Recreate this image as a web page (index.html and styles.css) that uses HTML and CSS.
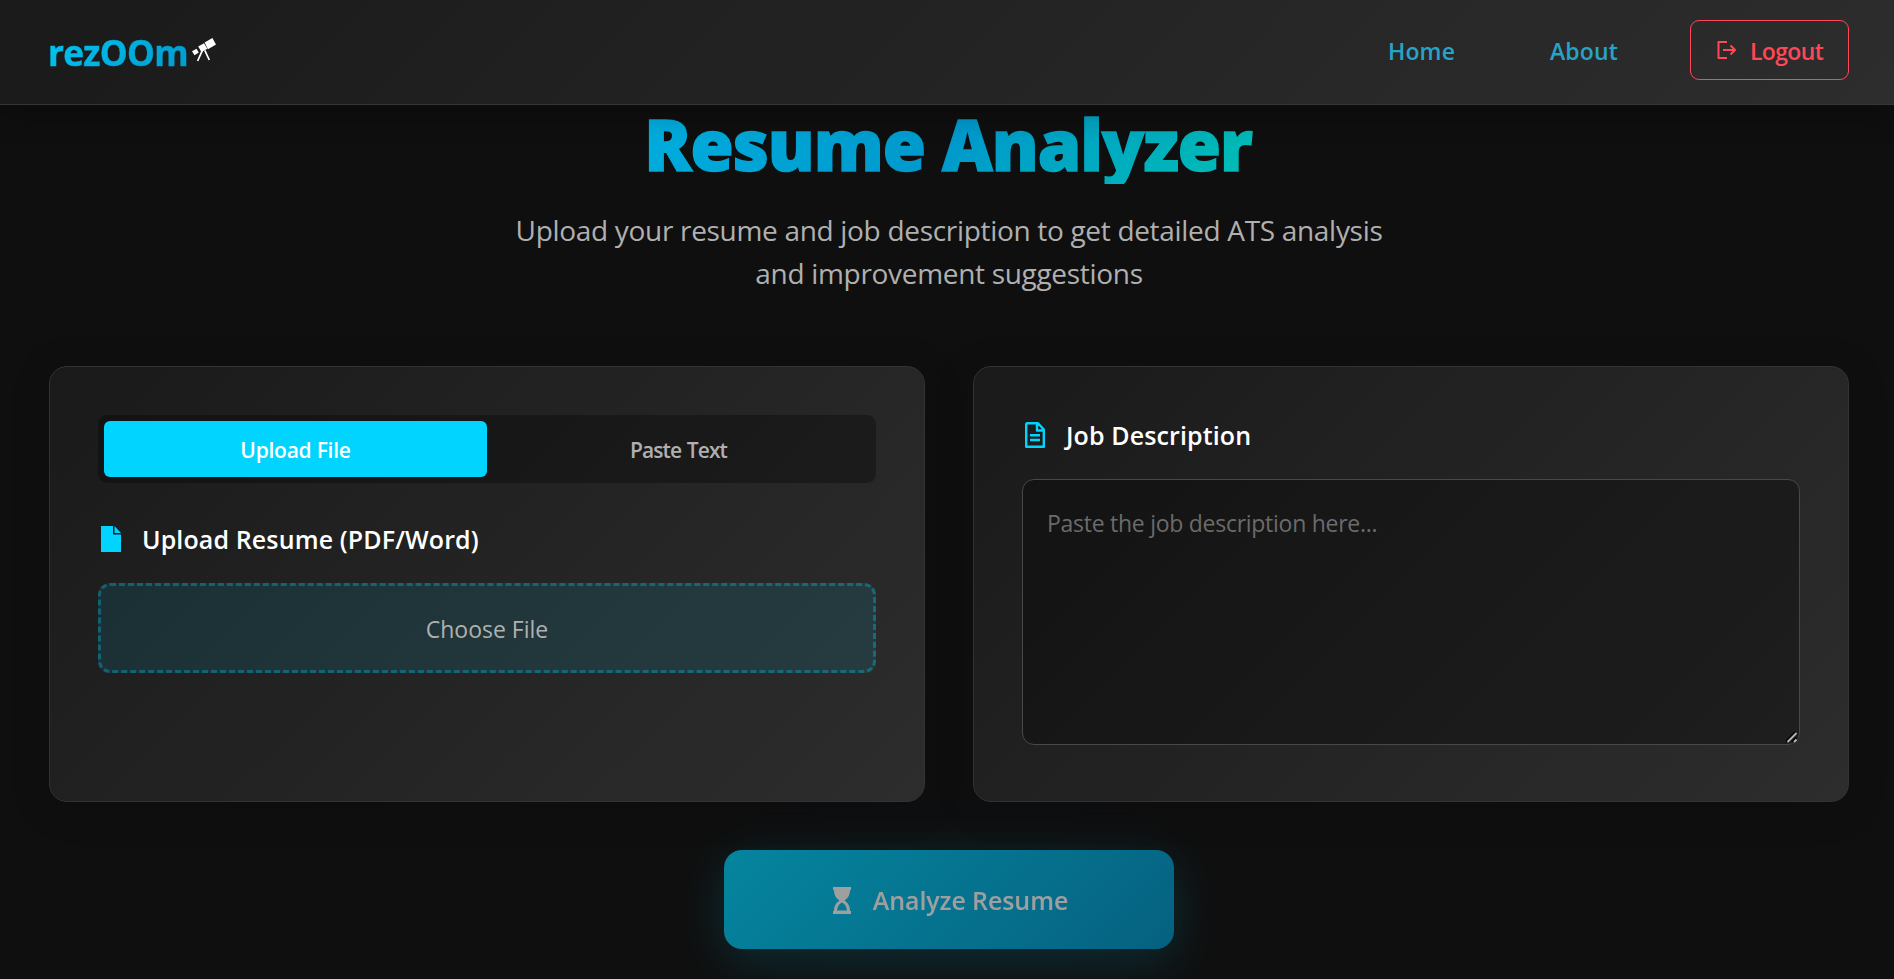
FILE: index.html
```html
<!DOCTYPE html>
<html lang="en">
<head>
<meta charset="utf-8">
<title>rezOOm</title>
<link rel="stylesheet" href="styles.css">
</head>
<body>
<header class="header">
  <div class="logo">
    <span class="logo-text">rezOOm</span>
    <svg class="logo-icon" viewBox="0 0 24 24" fill="#fff"><path d="M12.600 4.600L20.400 0L24 6.400L16 11.200zM6.200 8.600L12 5.200L15.400 10.800L9.400 14zM0 13.200L4.500 10.700L6.800 14.600L2.500 17.200z"/><path d="M10.400 12.400L5.600 23M12.800 12.400L17.300 22" stroke="#fff" stroke-width="1.700"/></svg>
  </div>
  <nav class="nav">
    <a class="nav-link home">Home</a>
    <a class="nav-link about">About</a>
    <a class="logout">
      <svg class="logout-icon" viewBox="0 0 20 18" fill="none" stroke="#ff4757" stroke-width="2" stroke-linejoin="round"><path d="M10 1H1.500V17H10M6 9H18M13.500 4.500L18 9l-4.500 4.500"/></svg>
      <span>Logout</span>
    </a>
  </nav>
</header>
<main class="page">
  <h1 class="title">Resume Analyzer</h1>
  <p class="subtitle">Upload your resume and job description to get detailed ATS analysis<br>and improvement suggestions</p>
  <div class="cards">
    <section class="card">
      <div class="tabs">
        <button class="tab active">Upload File</button>
        <button class="tab">Paste Text</button>
      </div>
      <h2 class="label upload-label">
        <svg class="label-icon" viewBox="0 0 20 26" fill="#00d4ff"><path d="M0 0H12V8.500H20V26H0zM13.500 0L20 7H13.500z"/></svg>
        <span>Upload Resume (PDF/Word)</span>
      </h2>
      <div class="file-box">Choose File</div>
    </section>
    <section class="card">
      <h2 class="label job-label">
        <svg class="label-icon" viewBox="0 0 20 26" fill="none" stroke="#00d4ff" stroke-width="2.400" stroke-linejoin="round"><path d="M2 1.200H13L18.800 7.500V24.800H1.200V2zM12 1V8.500H19M5 13.300H15M5 18H15"/></svg>
        <span>Job Description</span>
      </h2>
      <div class="job-field">
        <textarea class="job-text" placeholder="Paste the job description here..."></textarea>
        <svg class="grip" viewBox="0 0 12 12"><path d="M0 10.500L9.500 1M6 11L10.500 6.500" stroke="#000" stroke-width="2" fill="none"/><path d="M1.500 11L10.500 2M8 11L10.500 8.500" stroke="#b8b8b0" stroke-width="1.800" fill="none"/></svg>
      </div>
    </section>
  </div>
  <button class="analyze">
    <svg class="hourglass" viewBox="0 0 18 27" fill="#fff"><path d="M0 0H18V3H17C17 8 15 11 11.500 13.500C15 16 17 19 17 24H18V27H0V24H1C1 19 3 16 6.500 13.500C3 11 1 8 1 3H0zM4 23.500H14C13.500 19.500 12 17 9 15.500C6 17 4.500 19.500 4 23.500z"/></svg>
    <span>Analyze Resume</span>
  </button>
</main>
</body>
</html>
```
FILE: styles.css
```css
* { box-sizing: border-box; }
html { overflow: hidden; }
body {
  margin: 0;
  width: 1898px;
  height: 979px;
  overflow: hidden;
  background: #0f0f0f;
  color: #fff;
  font-family: "Open Sans", "Noto Sans", sans-serif;
}
.header {
  position: relative;
  z-index: 1;
  display: flex;
  justify-content: space-between;
  align-items: center;
  height: 105px;
  padding: 0 49px 4px;
  background: linear-gradient(135deg, #1a1a1a, #2d2d2d);
  border-bottom: 1px solid #363636;
  box-shadow: 0 6px 30px rgba(0, 0, 0, .3);
}
.logo { display: flex; align-items: center; gap: 3px; margin-left: -1px; }
.logo-text {
  width: 141px;
  font-size: 35px;
  font-weight: 700;
  letter-spacing: -.6px;
  line-height: 48px;
  white-space: nowrap;
  padding-top: 5px;
  background: linear-gradient(135deg, #00c8f5, #0099cc);
  -webkit-background-clip: text;
  background-clip: text;
  color: transparent;
  -webkit-text-stroke: .6px transparent;
}
.logo-icon { width: 24px; height: 24px; }
.nav { display: flex; align-items: center; }
.nav-link {
  font-size: 23px;
  font-weight: 600;
  letter-spacing: .15px;
  line-height: 34px;
  color: #27a3c8;
  white-space: nowrap;
  padding-top: 2px;
}
.home { width: 162px; }
.about { width: 140px; }
.logout {
  display: flex;
  align-items: center;
  gap: 13px;
  width: 159px;
  height: 60px;
  padding-left: 26px;
  border: 1px solid #ff4757;
  border-radius: 9px;
  color: #ff4757;
  font-size: 23px;
  font-weight: 600;
  letter-spacing: -.65px;
}
.logout span { padding-top: 1px; }
.logout-icon { width: 20px; height: 18px; }
.page {
  display: flex;
  flex-direction: column;
  align-items: stretch;
  padding: 0 49px;
}
.title {
  margin: 0;
  height: 79px;
  font-family: "Noto Sans", "Open Sans", sans-serif;
  font-size: 70px;
  font-weight: 900;
  letter-spacing: -1.05px;
  line-height: 79px;
  text-align: center;
  text-indent: -2px;
  background: linear-gradient(135deg, #00d4ff, #0099cc, #00ff88);
  -webkit-background-clip: text;
  background-clip: text;
  color: transparent;
  -webkit-text-stroke: 1.5px transparent;
}
.subtitle {
  margin: 25px 0 0;
  height: 157px;
  color: #b0b0b0;
  font-size: 28px;
  letter-spacing: -.31px;
  line-height: 43px;
  text-align: center;
}
.cards { display: grid; grid-template-columns: 1fr 1fr; gap: 48px; }
.card {
  height: 436px;
  padding: 48px;
  background: linear-gradient(135deg, #1a1a1a, #2d2d2d);
  border: 1px solid #333;
  border-radius: 18px;
  box-shadow: 0 6px 40px rgba(0, 0, 0, .15);
}
.tabs {
  display: flex;
  height: 68px;
  padding: 6px;
  border-radius: 9px;
  background: rgba(0, 0, 0, .3);
}
.tab {
  flex: 1;
  padding: 1px 0 0;
  border: 0;
  border-radius: 6px;
  background: none;
  color: #b0b0b0;
  font-family: inherit;
  font-size: 21px;
  font-weight: 600;
  letter-spacing: -.9px;
  word-spacing: 1px;
}
.tab.active { background: #00d4ff; color: #fff; letter-spacing: -.25px; word-spacing: 0; }
.label {
  display: flex;
  align-items: center;
  gap: 21px;
  margin: 0;
  padding-left: 3px;
  font-size: 25px;
  font-weight: 600;
  letter-spacing: .12px;
  line-height: 36px;
}
.label-icon { width: 20px; height: 26px; }
.upload-label { margin-top: 38px; }
.file-box {
  display: flex;
  align-items: center;
  justify-content: center;
  height: 90px;
  margin-top: 26px;
  padding-top: 2px;
  border: 3px dashed rgba(0, 212, 255, .3);
  border-radius: 12px;
  background: rgba(0, 212, 255, .1);
  color: #b0b0b0;
  font-size: 23px;
}
.job-label { margin-top: 2px; }
.job-field { position: relative; margin-top: 26px; }
.job-text {
  display: block;
  width: 100%;
  height: 266px;
  padding: 24px;
  border: 1px solid #484848;
  border-radius: 12px;
  background: rgba(0, 0, 0, .3);
  color: #fff;
  font-family: inherit;
  font-size: 23px;
  letter-spacing: -.27px;
  line-height: 38px;
  resize: none;
}
.job-text::placeholder { color: #6b6b6b; }
.grip {
  position: absolute;
  right: 2px;
  bottom: 2px;
  width: 12px;
  height: 12px;
}
.analyze {
  display: flex;
  align-items: center;
  justify-content: center;
  gap: 21px;
  align-self: center;
  width: 450px;
  height: 99px;
  margin-top: 48px;
  padding: 1px 0 0 2px;
  border: 0;
  border-radius: 18px;
  background: linear-gradient(135deg, #00d4ff, #0099cc);
  box-shadow: 0 12px 48px rgba(0, 212, 255, .25), 0 0 120px rgba(0, 212, 255, .04);
  color: #fff;
  font-family: inherit;
  font-size: 25px;
  font-weight: 600;
  letter-spacing: -.1px;
  opacity: .6;
}
.hourglass { width: 20px; height: 27px; }
```
